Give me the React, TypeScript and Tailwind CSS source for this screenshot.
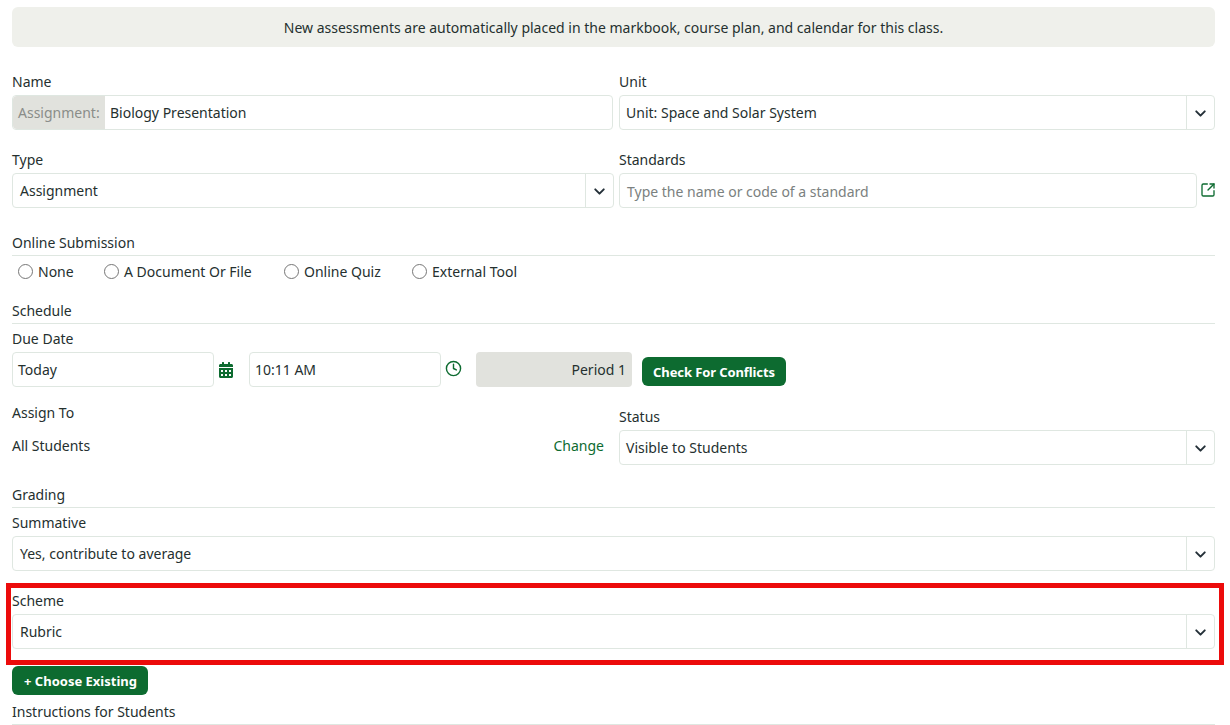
import { ChevronDown, Clock, SquareArrowOutUpRight } from "lucide-react";
import { FaCalendarAlt } from "react-icons/fa";

function Label({ children, className = "" }: { children: React.ReactNode; className?: string }) {
  return <div className={`h-5 leading-5 ${className}`}>{children}</div>;
}

function Select({ value, width = "w-full", inset = "pl-[7px]" }: { value: string; width?: string; inset?: string }) {
  return (
    <div className={`flex h-[35px] ${width} items-stretch rounded border border-[#dfe7e1] bg-white`}>
      <div className={`flex flex-1 items-center pb-px ${inset}`}>{value}</div>
      <div className="flex w-7 items-center justify-center border-l border-[#dfe7e1] pt-[2px]">
        <ChevronDown size={17} strokeWidth={2.75} className="text-[#243038]" />
      </div>
    </div>
  );
}

function Section({ title, className = "" }: { title: string; className?: string }) {
  return (
    <div className={`h-[23px] border-b border-[#dfe7e1] ${className}`}>
      <div className="h-5 leading-5">{title}</div>
    </div>
  );
}

function Radio({ label, className }: { label: string; className: string }) {
  return (
    <label className={`flex items-center gap-[5px] ${className}`}>
      <input type="radio" name="submission" className="m-0 h-[15px] w-[15px]" />
      <span>{label}</span>
    </label>
  );
}

export default function App() {
  return (
    <div className="relative h-[725px] w-[1230px] overflow-hidden bg-white pl-3 pr-[15px] pt-[7px] font-['Noto_Sans',sans-serif] text-[14px] text-[#25302f]">
      <div className="flex h-10 items-center justify-center rounded-md bg-[#eff0eb]">
        New assessments are automatically placed in the markbook, course plan, and calendar for this class.
      </div>

      <div className="mt-[25px] grid grid-cols-[601px_596px] gap-x-[6px]">
        <div>
          <Label className="mb-[3px]">Name</Label>
          <div className="flex h-[35px] items-stretch rounded border border-[#dfe7e1] bg-white">
            <div className="flex w-[92px] items-center rounded-l bg-[#e1e2dd] pl-[5px] text-[#8a8d89]">Assignment:</div>
            <div className="flex flex-1 items-center pl-[5px]">Biology Presentation</div>
          </div>
        </div>
        <div>
          <Label className="mb-[3px]">Unit</Label>
          <Select value="Unit: Space and Solar System" inset="pl-[6px]" />
        </div>
        <div className="mt-5">
          <Label className="mb-[3px]">Type</Label>
          <Select value="Assignment" width="w-[602px]" />
        </div>
        <div className="mt-5">
          <Label className="mb-[3px]">Standards</Label>
          <div className="flex items-center gap-[3px]">
            <div className="flex h-[35px] w-[578px] shrink-0 items-center rounded border border-[#dfe7e1] pl-[7px] pt-px text-[#7b8180]">
              Type the name or code of a standard
            </div>
            <SquareArrowOutUpRight size={16} strokeWidth={2} className="-mt-[2px] shrink-0 text-[#0d6b30]" />
          </div>
        </div>
      </div>

      <Section title="Online Submission" className="mt-[25px]" />
      <div className="mt-[5px] flex h-5 items-center pl-[6px]">
        <Radio label="None" className="w-[86px]" />
        <Radio label="A Document Or File" className="w-[180px]" />
        <Radio label="Online Quiz" className="w-[128px]" />
        <Radio label="External Tool" className="" />
      </div>

      <Section title="Schedule" className="mt-5" />
      <Label className="mt-[5px] mb-[3px]">Due Date</Label>
      <div className="flex h-[35px] items-center">
        <div className="flex h-full w-[202px] items-center rounded border border-[#dfe7e1] pl-[5px]">Today</div>
        <FaCalendarAlt size={16} className="ml-1 text-[#0d6b30]" />
        <div className="ml-[15px] flex h-full w-[192px] items-center rounded border border-[#dfe7e1] pl-[5px]">10:11 AM</div>
        <Clock size={17} strokeWidth={2} className="ml-1 -mt-[2px] text-[#0d6b30]" />
        <div className="ml-[14px] flex h-full w-[156px] items-center justify-end rounded bg-[#e1e2dd] pr-[6px]">Period 1</div>
        <button className="mt-[4px] ml-[10px] h-[29px] w-[144px] rounded-md bg-[#0d6b30] pt-[2px] text-[13px] font-bold tracking-[-0.1px] text-white">
          Check For Conflicts
        </button>
      </div>

      <div className="mt-4 grid grid-cols-[601px_596px] gap-x-[6px]">
        <div>
          <Label>Assign To</Label>
          <div className="mt-[13px] flex h-5 items-center justify-between pr-[9px] leading-5">
            <span>All Students</span>
            <span className="text-[#0d6b30]">Change</span>
          </div>
        </div>
        <div className="pt-1">
          <Label className="mb-[3px]">Status</Label>
          <Select value="Visible to Students" inset="pl-[6px]" />
        </div>
      </div>

      <Section title="Grading" className="mt-5" />
      <Label className="mt-[5px] mb-[3px]">Summative</Label>
      <Select value="Yes, contribute to average" />

      <div className="relative mt-5">
        <Label className="mb-[3px]">Scheme</Label>
        <Select value="Rubric" />
        <div className="pointer-events-none absolute -top-[8px] -right-[9px] -bottom-[16px] -left-[6px] border-[5px] border-[#ec0b0b]"></div>
      </div>

      <button className="mt-[17px] block h-[29px] w-[136px] rounded-md bg-[#0d6b30] pl-px pt-[2px] text-[13px] font-bold text-white">
        + Choose Existing
      </button>
      <Section title="Instructions for Students" className="mt-[7px]" />
    </div>
  );
}
